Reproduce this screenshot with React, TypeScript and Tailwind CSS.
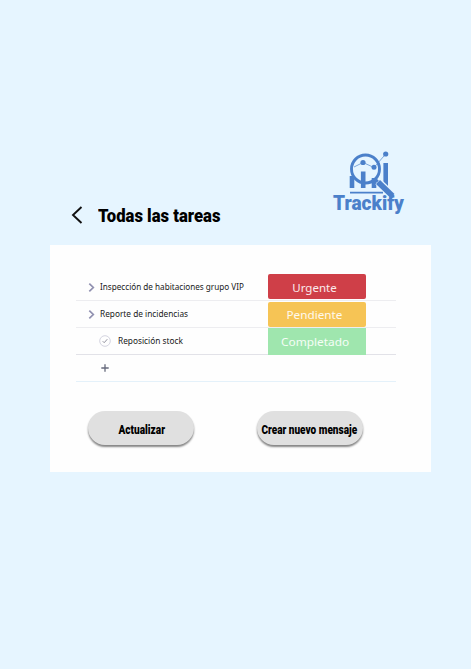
import React from "react";

function Logo() {
  return (
    <svg className="block h-[75px] w-[90px]" viewBox="0 0 90 75" fill="none" stroke="#4b80ca" aria-label="Trackify">
      <path d="M27 31v12M38.200 26.500v16.500M49 33v10M60.700 18v24" strokeWidth="4.600" />
      <path d="M25 47.600h33" strokeWidth="1.800" />
      <path d="M29 22l9-4.500 11 5L60.700 9" strokeWidth=".9" strokeOpacity=".75" />
      <circle cx="40.500" cy="24" r="14" strokeWidth="2.900" />
      <path d="M50 34l5 5" strokeWidth="3" />
      <path d="M53 36.500L68 51" stroke="#e6f5ff" strokeWidth="7.500" />
      <path d="M53 37L67.500 51" strokeWidth="5.800" />
      <g fill="#4b80ca" stroke="none">
        <circle cx="38" cy="17.500" r="2.600" />
        <circle cx="49" cy="22.300" r="2.500" />
        <circle cx="60.700" cy="9" r="2.600" />
        <text
          x="8"
          y="64.800"
          fontSize="21"
          fontWeight="900"
          textLength="71"
          lengthAdjust="spacingAndGlyphs"
          fontFamily="Roboto, sans-serif"
        >
          Trackify
        </text>
      </g>
    </svg>
  );
}

function Chevron() {
  return (
    <svg className="h-[9px] w-[7px] shrink-0" viewBox="0 0 7 9" fill="none" stroke="#9090b0" strokeWidth="1.700">
      <path d="M1.300.7L5.300 4.500 1.300 8.300" />
    </svg>
  );
}

const row = "flex h-[27px] items-center border-b";
const label = "origin-left text-[8.6px] leading-none whitespace-nowrap text-[#202020]";
const badge = "flex w-[98px] items-center justify-center text-[11.5px] leading-none text-white/90";
const button =
  "flex h-[34px] w-[106px] items-center justify-center rounded-full bg-[#e0e0e0] pt-[4px] font-[Roboto,sans-serif] text-[12px] font-black text-black shadow-[0_2px_2px_#858585]";

export default function App() {
  return (
    <main className="h-[669px] w-[471px] bg-[#e6f5ff] pt-[145px] font-['Noto_Sans',sans-serif]">
      <header className="flex h-[100px] items-start pl-[71px]">
        <div className="flex w-[254px] items-start pt-[60px]">
          <svg className="h-[20px] w-[12px]" viewBox="0 0 12 20" fill="none" stroke="#111" strokeWidth="1.900">
            <path d="M10.500 2L2 10l8.500 8" />
          </svg>
          <h1 className="ml-[15px] origin-left scale-x-[0.877] pt-px font-[Roboto,sans-serif] text-[19px] leading-[20px] font-black whitespace-nowrap text-black">
            Todas las tareas
          </h1>
        </div>
        <Logo />
      </header>
      <section className="ml-[50px] h-[227px] w-[381px] bg-[#fefefe] pt-[29px]">
        <div className="ml-[26px] w-[320px]">
          <div className={`${row} border-[#ededf0]`}>
            <div className="flex w-[192px] items-center gap-[5px] pl-3">
              <Chevron />
              <span className={`${label} scale-x-[0.948]`}>Inspección de habitaciones grupo VIP</span>
            </div>
            <div className={`${badge} mb-[2px] h-[25px] rounded-[2px] bg-[#cf3f48] pt-[3px] pr-[5px]`}>
              <span>Urgente</span>
            </div>
          </div>
          <div className={`${row} border-[#ededf0]`}>
            <div className="flex w-[192px] items-center gap-[5px] pl-3">
              <Chevron />
              <span className={`${label} scale-x-[0.963]`}>Reporte de incidencias</span>
            </div>
            <div className={`${badge} h-[25px] rounded-[2px] bg-[#f6c455] pt-px pr-[5px]`}>
              <span className="scale-x-[1.02]">Pendiente</span>
            </div>
          </div>
          <div className={`${row} border-[#e2e2e8]`}>
            <div className="flex w-[192px] items-center gap-[7px] pl-[23px]">
              <svg className="h-3 w-3 shrink-0" viewBox="0 0 12 12" fill="none">
                <circle cx="6" cy="6" r="5.300" stroke="#cfcfdd" strokeWidth=".9" />
                <path d="M3.700 6.200l1.500 1.500 3.100-3.500" stroke="#92929f" />
              </svg>
              <span className={`${label} scale-x-[0.965]`}>Reposición stock</span>
            </div>
            <div className={`${badge} -mb-px h-[27px] bg-[#9fe6ae] pr-[4px]`}>
              <span className="scale-x-[1.03]">Completado</span>
            </div>
          </div>
          <div className={`${row} border-[#e4f1fa] pl-[25px]`}>
            <svg className="h-2 w-2" viewBox="0 0 8 8" stroke="#666a7c" strokeWidth="1.300">
              <path d="M4 .3v7.400M.3 4h7.400" />
            </svg>
          </div>
        </div>
        <div className="mt-[29px] ml-[38px] flex gap-[63px]">
          <button className={button}>
            <span className="ml-[2px] scale-x-[0.84] whitespace-nowrap">Actualizar</span>
          </button>
          <button className={button}>
            <span className="-ml-[2px] scale-x-[0.836] whitespace-nowrap">Crear nuevo mensaje</span>
          </button>
        </div>
      </section>
    </main>
  );
}
